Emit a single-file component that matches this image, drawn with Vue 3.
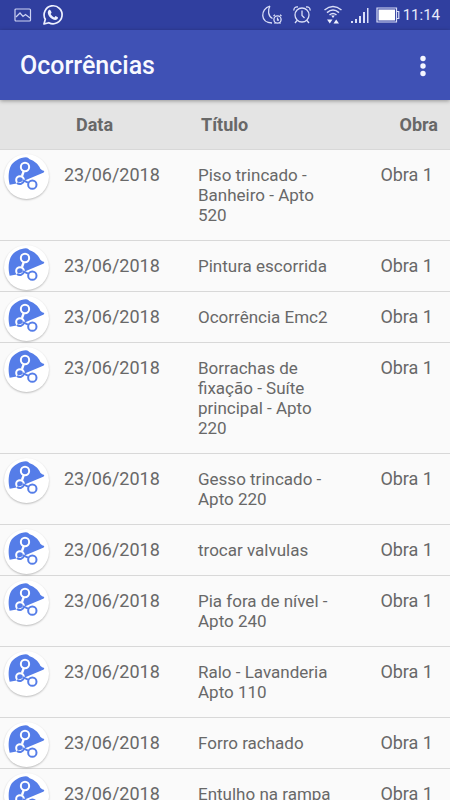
<script setup>
const rows = [
  'Piso trincado - Banheiro - Apto 520',
  'Pintura escorrida',
  'Ocorrência Emc2',
  'Borrachas de fixação - Suíte principal - Apto 220',
  'Gesso trincado - Apto 220',
  'trocar valvulas',
  'Pia fora de nível - Apto 240',
  'Ralo - Lavanderia Apto 110',
  'Forro rachado',
  'Entulho na rampa',
].map((title, id) => ({ id, title, date: '23/06/2018', site: 'Obra 1' }))
</script>

<template>
  <div class="screen">
    <div class="status">
      <div class="group left">
        <svg width="18" height="14" viewBox="0 0 18 14" fill="none" stroke="#cdd3f3" stroke-width="1.2">
          <rect x="1" y="1" width="15.500" height="12" rx="1" />
          <path d="M2 9 L6 5 L9 8.500 L11.500 6.500 L16 10" />
        </svg>
        <svg width="22" height="22" viewBox="0 0 22 22" fill="none" stroke="#eef1ff">
          <path d="M2 20 L3.300 15.300 A9 9 0 1 1 6.800 18.700 Z" stroke-width="1.700" stroke-linejoin="round" />
          <path d="M7.300 5.800 C8.200 5.500 8.600 5.900 9.600 8.700 L8.600 10 C9.500 11.600 10.700 12.700 12.300 13.400 L13.500 12.100 C16 13.200 16.200 13.400 15.900 14.200 C15 16.300 12.700 16.300 10.200 14.900 C7.600 13.400 6 11 5.800 9 C5.700 7.500 6.400 6.200 7.300 5.800 Z" fill="#eef1ff" stroke="none" />
        </svg>
      </div>
      <div class="group">
        <svg width="22" height="20" viewBox="0 0 22 20" fill="none" stroke="#d9def8" stroke-width="1.300">
          <path d="M9 1 C-1 4 -1 18 11 18 M9 1 C6.500 5 7 11 11.500 13.500" />
          <circle cx="16.500" cy="14.500" r="3.600" />
          <path d="M16.500 12.500 V15 H18 M12.500 11 L14 9.800 M20.500 11 L19 9.800 M13.500 18.500 L14.500 17.500 M19.500 18.500 L18.500 17.500" />
        </svg>
        <svg class="alarm" width="18" height="20" viewBox="0 0 18 20" fill="none" stroke="#d9def8" stroke-width="1.300">
          <circle cx="9" cy="10" r="7" />
          <path d="M9 5.500 V10.500 L11.500 13 M1 5.500 C0.500 3 2.500 1.500 5 2 M17 5.500 C17.500 3 15.500 1.500 13 2 M4 15.500 L2 18 M14 15.500 L16 18" />
        </svg>
        <svg class="wifi" width="20" height="20" viewBox="0 0 20 20" fill="none" stroke="#d9def8" stroke-width="1.500">
          <path d="M1.500 5 Q10 -2 18.500 5 M4 7.600 Q10 2.500 16 7.600 M6.500 10 Q10 7 13.500 10" />
          <path d="M8.200 10.500 H11.800 L10 13 Z M4 14.500 H9.500 L6.800 18.500 Z M10.500 18.500 H16 L13.200 14.500 Z" fill="#eef1ff" stroke="none" />
        </svg>
        <svg class="signal" width="18" height="17" viewBox="0 0 18 17" fill="#d9def8">
          <path d="M0 14 H2 V16 H0 Z M4 12 H6 V16 H4 Z M8 9 H10 V16 H8 Z M12 5 H14 V16 H12 Z M16 1 H17.500 V16 H16 Z" />
        </svg>
        <svg class="battery" width="24" height="16" viewBox="0 0 24 16" fill="none" stroke="#d9def8">
          <path d="M1 1 H20.500 V15 H1 Z M20.500 4.500 H22.800 V11.500 H20.500" stroke-width="1.200" />
          <rect x="2.500" y="2.500" width="16.500" height="11" fill="#fff" stroke="none" />
        </svg>
        <span class="clock">11:14</span>
      </div>
    </div>

    <header class="bar">
      <h1>Ocorrências</h1>
      <button class="more" type="button" aria-label="Mais opções">
        <svg width="6" height="22" viewBox="0 0 6 22" fill="#f4f6ff">
          <circle cx="3" cy="3.500" r="2.700" />
          <circle cx="3" cy="11" r="2.700" />
          <circle cx="3" cy="18.500" r="2.700" />
        </svg>
      </button>
    </header>

    <table class="list">
      <colgroup>
        <col class="c-icon" />
        <col class="c-date" />
        <col class="c-title" />
        <col class="c-site" />
      </colgroup>
      <thead>
        <tr>
          <th></th>
          <th class="date">Data</th>
          <th class="title">Título</th>
          <th class="site">Obra</th>
        </tr>
      </thead>
      <tbody>
        <tr v-for="row in rows" :key="row.id">
          <td class="icon">
            <span class="avatar">
              <svg viewBox="12 12 135 135" fill="none">
                <path d="M29 104 C25 88 24 66 32 49 C40 33 60 23 78 22 Q84 22 89 28 C104 33 116 44 121 56 Q126 62 133 63 Q133 68 126 70 L76 91 L46 101 Z" fill="#557de8" />
                <path d="M71 64 L66 78" stroke="#fff" stroke-width="7" />
                <circle cx="75" cy="51" r="12.500" stroke="#fff" stroke-width="6" />
                <circle cx="60" cy="90" r="11.500" stroke="#fff" stroke-width="6" />
                <path d="M51 99 A13 13 0 0 0 72 92 L84 98" stroke="#557de8" stroke-width="6" />
                <circle cx="97" cy="104" r="12.500" fill="#fff" stroke="#557de8" stroke-width="6" />
              </svg>
            </span>
          </td>
          <td class="date">{{ row.date }}</td>
          <td class="title">{{ row.title }}</td>
          <td class="site">{{ row.site }}</td>
        </tr>
      </tbody>
    </table>
  </div>
</template>

<style>
body {
  margin: 0;
  background: #fafafa;
}
</style>

<style scoped>
.screen {
  height: 100vh;
  overflow: hidden;
  display: flex;
  flex-direction: column;
  background: #fafafa;
  color: #686868;
  font-family: Roboto, "Liberation Sans", sans-serif;
}
.status {
  flex: none;
  height: 30px;
  box-sizing: border-box;
  padding: 0 10px 0 14px;
  display: flex;
  align-items: center;
  justify-content: space-between;
  background: #303f9f;
}
.group {
  display: flex;
  align-items: center;
}
.left {
  gap: 10px;
}
.alarm {
  margin-left: 10px;
}
.wifi {
  margin-left: 12px;
}
.signal {
  margin-left: 8px;
}
.battery {
  margin-left: 7px;
}
.clock {
  margin-left: 3px;
  font-size: 15px;
  color: #e8ebfb;
}
.bar {
  flex: none;
  height: 70px;
  box-sizing: border-box;
  padding: 2px 12px 0 20px;
  display: flex;
  align-items: center;
  justify-content: space-between;
  background: #3f51b5;
  position: relative;
  z-index: 1;
  box-shadow: 0 1px 4px rgba(0, 0, 0, 0.35);
}
h1 {
  margin: 0;
  font-size: 25px;
  font-weight: 500;
  line-height: 32px;
  color: #f8f9ff;
}
.more {
  width: 30px;
  height: 48px;
  padding: 0;
  border: 0;
  background: none;
  display: flex;
  align-items: center;
  justify-content: center;
}
.list {
  width: 100%;
  table-layout: fixed;
  border-collapse: separate;
  border-spacing: 0;
  font-size: 18px;
  line-height: 20px;
}
.c-icon {
  width: 12%;
}
.c-date,
.c-title {
  width: 32%;
}
.c-site {
  width: 24%;
}
th,
td {
  padding: 15px 0;
  border-bottom: 1px solid #d8d8d8;
  text-align: left;
  vertical-align: top;
}
th {
  padding-bottom: 14px;
  background: #e4e4e4;
  font-weight: 700;
}
td.icon {
  padding: 4px 0 0 4px;
}
td.date {
  padding-left: 10px;
}
th.date {
  padding-left: 22px;
}
td.title {
  padding-right: 6px;
  font-size: 17px;
}
th.title {
  padding-left: 3px;
}
td.site {
  padding-right: 17px;
  text-align: right;
}
th.site {
  padding-right: 12px;
  text-align: right;
}
.avatar {
  display: block;
  width: 45px;
  height: 45px;
  border-radius: 50%;
  background: #fff;
  box-shadow: 0 1px 2px rgba(0, 0, 0, 0.25);
}
.avatar svg {
  display: block;
}
</style>
